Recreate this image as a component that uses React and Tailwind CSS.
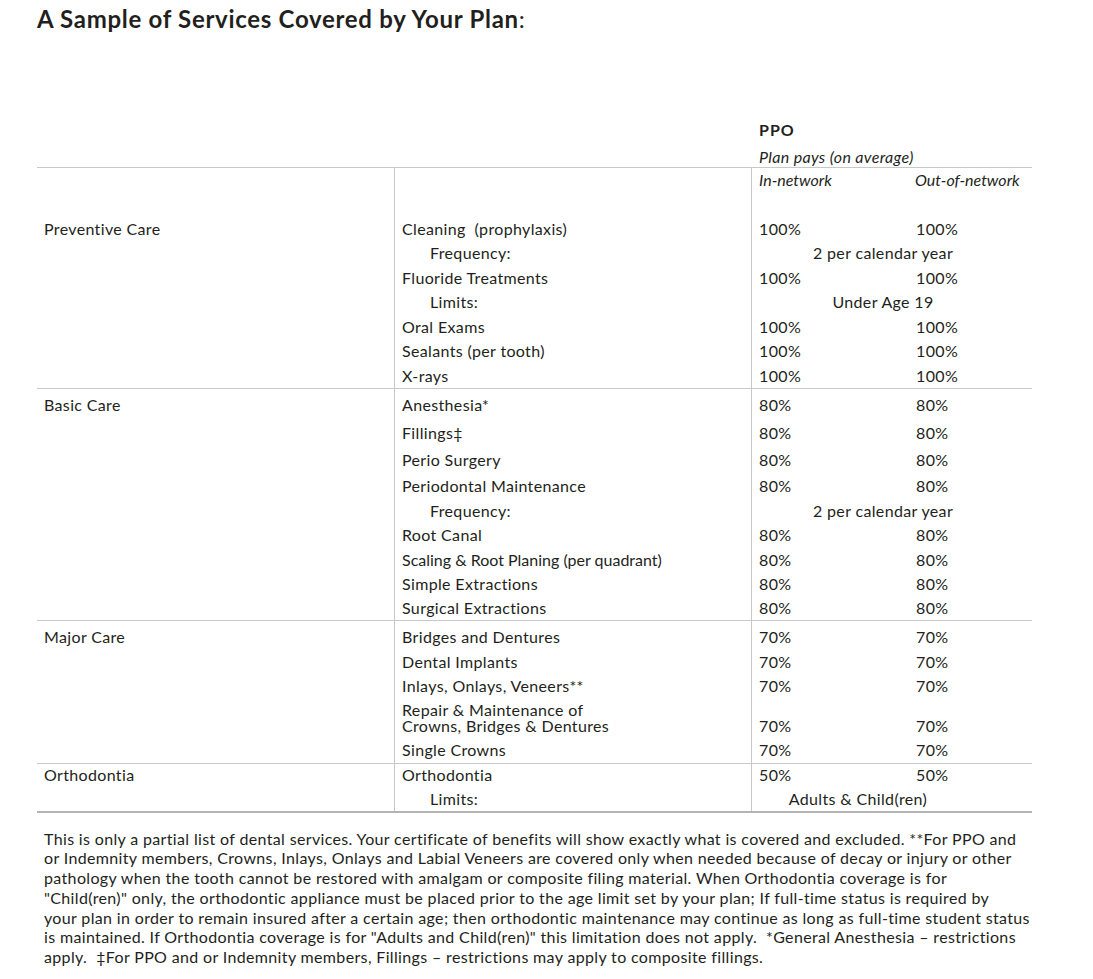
import React from "react";

const S1 = [
  { h: 24.5, a: "Cleaning\u00a0 (prophylaxis)", i: "100%", o: "100%" },
  { h: 24.5, a: "Frequency:", ind: true, span: "2 per calendar year" },
  { h: 24.5, a: "Fluoride Treatments", i: "100%", o: "100%" },
  { h: 24.5, a: "Limits:", ind: true, span: "Under Age 19" },
  { h: 24.5, a: "Oral Exams", i: "100%", o: "100%" },
  { h: 24.5, a: "Sealants (per tooth)", i: "100%", o: "100%" },
  { h: 24.5, a: "X-rays", i: "100%", o: "100%" },
];

const S2 = [
  { h: 31, a: "Anesthesia*", i: "80%", o: "80%" },
  { h: 26.5, a: "Fillings\u2021", i: "80%", o: "80%" },
  { h: 27, a: "Perio Surgery", i: "80%", o: "80%" },
  { h: 25, a: "Periodontal Maintenance", i: "80%", o: "80%" },
  { h: 24.5, a: "Frequency:", ind: true, span: "2 per calendar year" },
  { h: 24.5, a: "Root Canal", i: "80%", o: "80%" },
  { h: 24.5, a: "Scaling & Root Planing (per quadrant)", narrow: true, i: "80%", o: "80%" },
  { h: 24.5, a: "Simple Extractions", i: "80%", o: "80%" },
  { h: 23.5, a: "Surgical Extractions", i: "80%", o: "80%" },
];

const S3 = [
  { h: 25, a: "Bridges and Dentures", i: "70%", o: "70%" },
  { h: 24.5, a: "Dental Implants", i: "70%", o: "70%" },
  { h: 24.5, a: "Inlays, Onlays, Veneers**", i: "70%", o: "70%" },
  { h: 39.5, a2: ["Repair & Maintenance of", "Crowns, Bridges & Dentures"], i: "70%", o: "70%" },
  { h: 24.5, a: "Single Crowns", i: "70%", o: "70%" },
];

const S4 = [
  { h: 23.5, a: "Orthodontia", i: "50%", o: "50%" },
  { h: 23.5, a: "Limits:", ind: true, span: "Adults & Child(ren)", spanLeft: true },
];

function Section({ label, rows, pt = 0, last = false }) {
  return (
    <div
      className={
        "grid grid-cols-[357px_357px_281px] " +
        (last ? "" : "border-b border-[#c8c8c8]")
      }
    >
      <div style={{ paddingTop: pt }} className="pl-[7px]">
        <div style={{ height: rows[0].h }} className="flex items-center">
          {label}
        </div>
      </div>
      <div style={{ paddingTop: pt }} className="border-l border-[#c8c8c8] flex flex-col">
        {rows.map((r, k) => (
          <div
            key={k}
            style={{ height: r.h }}
            className={
              "flex items-center whitespace-nowrap " + (r.ind ? "pl-[35px]" : "pl-[7px]")
            }
          >
            {r.a2 ? (
              <div className="flex flex-col leading-[16.5px]">
                <span>{r.a2[0]}</span>
                <span>{r.a2[1]}</span>
              </div>
            ) : (
              <span className={r.narrow ? "tracking-normal" : ""}>{r.a}</span>
            )}
          </div>
        ))}
      </div>
      <div style={{ paddingTop: pt }} className="border-l border-[#c8c8c8] flex flex-col">
        {rows.map((r, k) =>
          r.span ? (
            <div
              key={k}
              style={{ height: r.h }}
              className={
                "flex items-center justify-center pl-[7px] " +
                (r.spanLeft ? "pr-[75px]" : "pr-[25px]")
              }
            >
              {r.span}
            </div>
          ) : (
            <div
              key={k}
              style={{ height: r.h }}
              className={
                "flex pl-[7px] " + (r.a2 ? "items-end pb-[2px]" : "items-center")
              }
            >
              <span className="w-[157px]">{r.i}</span>
              <span>{r.o}</span>
            </div>
          )
        )}
      </div>
    </div>
  );
}

export default function App() {
  return (
    <div className="w-[1093px] h-[979px] bg-white text-[#231f20] font-['Lato','Open_Sans',sans-serif] text-[16px] tracking-[0.35px] leading-[20px]">
      <div className="h-[40px] pl-[37px] pt-[5px]">
        <h1 className="text-[24px] leading-[28px] font-bold tracking-[0.7px]">
          A Sample of Services Covered by Your Plan<span className="font-normal">:</span>
        </h1>
      </div>
      <div className="ml-[37px] w-[995px]">
        <div className="h-[127px] flex flex-col justify-end pl-[722px]">
          <div className="h-[20px] font-bold tracking-[1px]">PPO</div>
          <div className="h-[20px] mt-[7px] italic">Plan pays (on average)</div>
        </div>
        <div className="border-t border-[#c8c8c8] border-b-2 border-b-[#b4b4b4]">
          <div className="grid grid-cols-[357px_357px_281px] h-[48.5px]">
            <div />
            <div className="border-l border-[#c8c8c8]" />
            <div className="border-l border-[#c8c8c8] pl-[7px] pt-[2px] flex italic tracking-normal">
              <span className="w-[156px]">In-network</span>
              <span>Out-of-network</span>
            </div>
          </div>
          <Section label="Preventive Care" rows={S1} />
          <Section label="Basic Care" rows={S2} />
          <Section label="Major Care" rows={S3} pt={3.5} />
          <Section label="Orthodontia" rows={S4} last />
        </div>
        <p className="pl-[7px] pt-[16px] leading-[19.8px] whitespace-nowrap">
          This is only a partial list of dental services. Your certificate of benefits will show exactly what is covered and excluded. **For PPO and
          <br />
          or Indemnity members, Crowns, Inlays, Onlays and Labial Veneers are covered only when needed because of decay or injury or other
          <br />
          pathology when the tooth cannot be restored with amalgam or composite filing material. When Orthodontia coverage is for
          <br />
          "Child(ren)" only, the orthodontic appliance must be placed prior to the age limit set by your plan; If full-time status is required by
          <br />
          your plan in order to remain insured after a certain age; then orthodontic maintenance may continue as long as full-time student status
          <br />
          is maintained. If Orthodontia coverage is for "Adults and Child(ren)" this limitation does not apply.{"\u00a0 "}*General Anesthesia – restrictions
          <br />
          apply.{"\u00a0 "}‡For PPO and or Indemnity members, Fillings – restrictions may apply to composite fillings.
        </p>
      </div>
    </div>
  );
}
